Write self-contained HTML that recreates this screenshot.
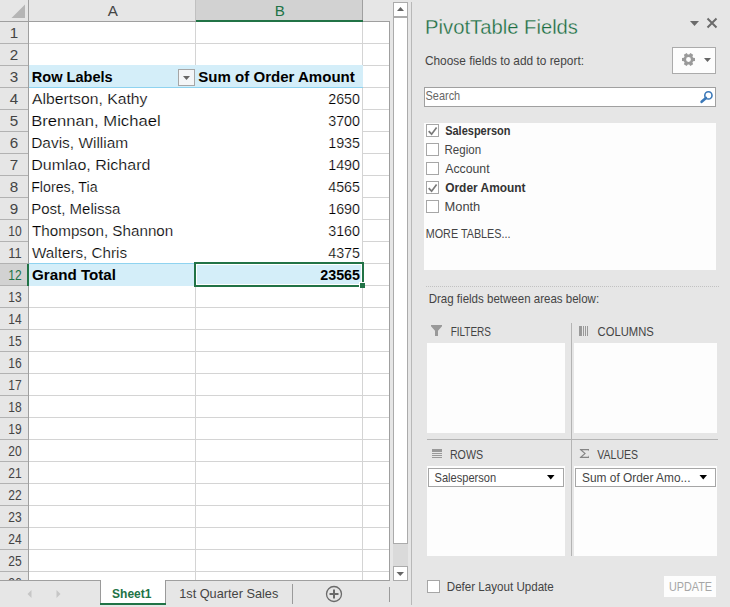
<!DOCTYPE html>
<html><head><meta charset="utf-8"><title>PivotTable</title>
<style>html,body{margin:0;padding:0;background:#e6e6e6;width:730px;height:607px;overflow:hidden;font-family:"Liberation Sans", sans-serif}
svg text{shape-rendering:auto;white-space:pre}
svg path,svg circle,svg line{shape-rendering:geometricPrecision}</style></head>
<body><svg width="730" height="607" viewBox="0 0 730 607" shape-rendering="crispEdges" font-family='"Liberation Sans", sans-serif' style="display:block"><defs><clipPath id="gridclip"><rect x="0" y="0" width="389" height="580"/></clipPath></defs><rect x="0" y="0" width="730" height="607" fill="#e6e6e6" />
<rect x="29" y="22" width="360" height="558" fill="#ffffff" />
<rect x="0" y="0" width="389" height="21" fill="#e6e6e6" />
<rect x="196" y="0" width="166" height="20" fill="#d2d2d2" />
<rect x="0" y="22" width="28" height="558" fill="#e6e6e6" />
<rect x="0" y="264" width="27" height="21" fill="#d2d2d2" />
<path d="M11.5 18 L25 18 L25 4.5 Z" fill="#b5b5b5"/>
<rect x="29" y="43" width="360" height="1" fill="#d4d4d4" />
<rect x="0" y="43" width="28" height="1" fill="#b2b2b2" />
<rect x="29" y="65" width="360" height="1" fill="#d4d4d4" />
<rect x="0" y="65" width="28" height="1" fill="#b2b2b2" />
<rect x="29" y="87" width="360" height="1" fill="#d4d4d4" />
<rect x="0" y="87" width="28" height="1" fill="#b2b2b2" />
<rect x="29" y="109" width="360" height="1" fill="#d4d4d4" />
<rect x="0" y="109" width="28" height="1" fill="#b2b2b2" />
<rect x="29" y="131" width="360" height="1" fill="#d4d4d4" />
<rect x="0" y="131" width="28" height="1" fill="#b2b2b2" />
<rect x="29" y="153" width="360" height="1" fill="#d4d4d4" />
<rect x="0" y="153" width="28" height="1" fill="#b2b2b2" />
<rect x="29" y="175" width="360" height="1" fill="#d4d4d4" />
<rect x="0" y="175" width="28" height="1" fill="#b2b2b2" />
<rect x="29" y="197" width="360" height="1" fill="#d4d4d4" />
<rect x="0" y="197" width="28" height="1" fill="#b2b2b2" />
<rect x="29" y="219" width="360" height="1" fill="#d4d4d4" />
<rect x="0" y="219" width="28" height="1" fill="#b2b2b2" />
<rect x="29" y="241" width="360" height="1" fill="#d4d4d4" />
<rect x="0" y="241" width="28" height="1" fill="#b2b2b2" />
<rect x="29" y="263" width="360" height="1" fill="#d4d4d4" />
<rect x="0" y="263" width="28" height="1" fill="#b2b2b2" />
<rect x="29" y="285" width="360" height="1" fill="#d4d4d4" />
<rect x="0" y="285" width="28" height="1" fill="#b2b2b2" />
<rect x="29" y="307" width="360" height="1" fill="#d4d4d4" />
<rect x="0" y="307" width="28" height="1" fill="#b2b2b2" />
<rect x="29" y="329" width="360" height="1" fill="#d4d4d4" />
<rect x="0" y="329" width="28" height="1" fill="#b2b2b2" />
<rect x="29" y="351" width="360" height="1" fill="#d4d4d4" />
<rect x="0" y="351" width="28" height="1" fill="#b2b2b2" />
<rect x="29" y="373" width="360" height="1" fill="#d4d4d4" />
<rect x="0" y="373" width="28" height="1" fill="#b2b2b2" />
<rect x="29" y="395" width="360" height="1" fill="#d4d4d4" />
<rect x="0" y="395" width="28" height="1" fill="#b2b2b2" />
<rect x="29" y="417" width="360" height="1" fill="#d4d4d4" />
<rect x="0" y="417" width="28" height="1" fill="#b2b2b2" />
<rect x="29" y="439" width="360" height="1" fill="#d4d4d4" />
<rect x="0" y="439" width="28" height="1" fill="#b2b2b2" />
<rect x="29" y="461" width="360" height="1" fill="#d4d4d4" />
<rect x="0" y="461" width="28" height="1" fill="#b2b2b2" />
<rect x="29" y="483" width="360" height="1" fill="#d4d4d4" />
<rect x="0" y="483" width="28" height="1" fill="#b2b2b2" />
<rect x="29" y="505" width="360" height="1" fill="#d4d4d4" />
<rect x="0" y="505" width="28" height="1" fill="#b2b2b2" />
<rect x="29" y="527" width="360" height="1" fill="#d4d4d4" />
<rect x="0" y="527" width="28" height="1" fill="#b2b2b2" />
<rect x="29" y="549" width="360" height="1" fill="#d4d4d4" />
<rect x="0" y="549" width="28" height="1" fill="#b2b2b2" />
<rect x="29" y="571" width="360" height="1" fill="#d4d4d4" />
<rect x="0" y="571" width="28" height="1" fill="#b2b2b2" />
<rect x="195" y="22" width="1" height="558" fill="#d4d4d4" />
<rect x="362" y="22" width="1" height="558" fill="#d4d4d4" />
<rect x="195" y="0" width="1" height="21" fill="#c0c0c0" />
<rect x="362" y="0" width="1" height="20" fill="#a0a0a0" />
<rect x="0" y="21" width="390" height="1" fill="#9f9f9f" />
<rect x="196" y="20" width="167" height="2" fill="#217346" />
<rect x="28" y="0" width="1" height="581" fill="#9f9f9f" />
<rect x="29" y="88" width="333" height="175" fill="#ffffff" />
<rect x="29" y="65" width="334" height="22" fill="#d4eef9" />
<rect x="29" y="87" width="334" height="1" fill="#8fd3f0" />
<rect x="29" y="263" width="334" height="1" fill="#8fd3f0" />
<rect x="29" y="264" width="334" height="22" fill="#d4eef9" />
<rect x="389" y="21" width="1" height="560" fill="#9f9f9f" />
<rect x="0" y="580" width="390" height="1" fill="#9f9f9f" />
<rect x="27" y="264" width="2" height="22" fill="#217346" />
<rect x="178" y="69" width="17" height="17" fill="#f4f6f8" />
<rect x="178" y="69" width="17" height="1" fill="#a6a6a6" />
<rect x="178" y="85" width="17" height="1" fill="#a6a6a6" />
<rect x="178" y="69" width="1" height="17" fill="#a6a6a6" />
<rect x="194" y="69" width="1" height="17" fill="#a6a6a6" />
<path d="M183 76 L190 76 L186.5 80 Z" fill="#666"/>
<rect x="194" y="262" width="170" height="2" fill="#217346" />
<rect x="194" y="262" width="2" height="25" fill="#217346" />
<rect x="194" y="285" width="165" height="2" fill="#217346" />
<rect x="362" y="262" width="2" height="20" fill="#217346" />
<rect x="196" y="264" width="166" height="1" fill="#ffffff" />
<rect x="196" y="264" width="1" height="21" fill="#ffffff" />
<rect x="196" y="284" width="166" height="1" fill="#ffffff" />
<rect x="361" y="264" width="1" height="21" fill="#ffffff" />
<rect x="359" y="282" width="6" height="6" fill="#ffffff" />
<rect x="360" y="283" width="5" height="5" fill="#217346" />
<g clip-path="url(#gridclip)">
<text x="112.7" y="16" font-size="15.2" fill="#444" font-weight="400" text-anchor="middle" >A</text>
<text x="279.7" y="16" font-size="15.2" fill="#217346" font-weight="400" text-anchor="middle" >B</text>
<text x="14.0" y="37.8" font-size="15.2" fill="#444" font-weight="400" text-anchor="middle" >1</text>
<text x="14.0" y="59.8" font-size="15.2" fill="#444" font-weight="400" text-anchor="middle" >2</text>
<text x="14.0" y="81.8" font-size="15.2" fill="#444" font-weight="400" text-anchor="middle" >3</text>
<text x="14.0" y="103.8" font-size="15.2" fill="#444" font-weight="400" text-anchor="middle" >4</text>
<text x="14.0" y="125.8" font-size="15.2" fill="#444" font-weight="400" text-anchor="middle" >5</text>
<text x="14.0" y="147.8" font-size="15.2" fill="#444" font-weight="400" text-anchor="middle" >6</text>
<text x="14.0" y="169.8" font-size="15.2" fill="#444" font-weight="400" text-anchor="middle" >7</text>
<text x="14.0" y="191.8" font-size="15.2" fill="#444" font-weight="400" text-anchor="middle" >8</text>
<text x="14.0" y="213.8" font-size="15.2" fill="#444" font-weight="400" text-anchor="middle" >9</text>
<text x="14.9" y="235.8" font-size="15.2" fill="#444" font-weight="400" text-anchor="middle" textLength="13.4" lengthAdjust="spacingAndGlyphs" >10</text>
<text x="14.9" y="257.8" font-size="15.2" fill="#444" font-weight="400" text-anchor="middle" textLength="13.4" lengthAdjust="spacingAndGlyphs" >11</text>
<text x="14.9" y="279.8" font-size="15.2" fill="#217346" font-weight="400" text-anchor="middle" textLength="13.4" lengthAdjust="spacingAndGlyphs" >12</text>
<text x="14.9" y="301.8" font-size="15.2" fill="#444" font-weight="400" text-anchor="middle" textLength="13.4" lengthAdjust="spacingAndGlyphs" >13</text>
<text x="14.9" y="323.8" font-size="15.2" fill="#444" font-weight="400" text-anchor="middle" textLength="13.4" lengthAdjust="spacingAndGlyphs" >14</text>
<text x="14.9" y="345.8" font-size="15.2" fill="#444" font-weight="400" text-anchor="middle" textLength="13.4" lengthAdjust="spacingAndGlyphs" >15</text>
<text x="14.9" y="367.8" font-size="15.2" fill="#444" font-weight="400" text-anchor="middle" textLength="13.4" lengthAdjust="spacingAndGlyphs" >16</text>
<text x="14.9" y="389.8" font-size="15.2" fill="#444" font-weight="400" text-anchor="middle" textLength="13.4" lengthAdjust="spacingAndGlyphs" >17</text>
<text x="14.9" y="411.8" font-size="15.2" fill="#444" font-weight="400" text-anchor="middle" textLength="13.4" lengthAdjust="spacingAndGlyphs" >18</text>
<text x="14.9" y="433.8" font-size="15.2" fill="#444" font-weight="400" text-anchor="middle" textLength="13.4" lengthAdjust="spacingAndGlyphs" >19</text>
<text x="14.9" y="455.8" font-size="15.2" fill="#444" font-weight="400" text-anchor="middle" textLength="13.4" lengthAdjust="spacingAndGlyphs" >20</text>
<text x="14.9" y="477.8" font-size="15.2" fill="#444" font-weight="400" text-anchor="middle" textLength="13.4" lengthAdjust="spacingAndGlyphs" >21</text>
<text x="14.9" y="499.8" font-size="15.2" fill="#444" font-weight="400" text-anchor="middle" textLength="13.4" lengthAdjust="spacingAndGlyphs" >22</text>
<text x="14.9" y="521.8" font-size="15.2" fill="#444" font-weight="400" text-anchor="middle" textLength="13.4" lengthAdjust="spacingAndGlyphs" >23</text>
<text x="14.9" y="543.8" font-size="15.2" fill="#444" font-weight="400" text-anchor="middle" textLength="13.4" lengthAdjust="spacingAndGlyphs" >24</text>
<text x="14.9" y="565.8" font-size="15.2" fill="#444" font-weight="400" text-anchor="middle" textLength="13.4" lengthAdjust="spacingAndGlyphs" >25</text>
<text x="14.9" y="587.8" font-size="15.2" fill="#444" font-weight="400" text-anchor="middle" textLength="13.4" lengthAdjust="spacingAndGlyphs" >26</text>
</g>
<g clip-path="url(#gridclip)">
<text x="31.8" y="81.7" font-size="14.3" fill="#000000" font-weight="700" text-anchor="start" textLength="80.9" lengthAdjust="spacingAndGlyphs" >Row Labels</text>
<text x="198.3" y="81.7" font-size="14.3" fill="#000000" font-weight="700" text-anchor="start" textLength="156.5" lengthAdjust="spacingAndGlyphs" >Sum of Order Amount</text>
<text x="32" y="103.5" font-size="14.3" fill="#000000" font-weight="400" text-anchor="start" textLength="115.4" lengthAdjust="spacingAndGlyphs" stroke="#ffffff" stroke-width="0.2">Albertson, Kathy</text>
<text x="360" y="103.5" font-size="14.3" fill="#000000" font-weight="400" text-anchor="end" stroke="#ffffff" stroke-width="0.2">2650</text>
<text x="31.2" y="125.5" font-size="14.3" fill="#000000" font-weight="400" text-anchor="start" textLength="129.4" lengthAdjust="spacingAndGlyphs" stroke="#ffffff" stroke-width="0.2">Brennan, Michael</text>
<text x="360" y="125.5" font-size="14.3" fill="#000000" font-weight="400" text-anchor="end" stroke="#ffffff" stroke-width="0.2">3700</text>
<text x="31.2" y="147.5" font-size="14.3" fill="#000000" font-weight="400" text-anchor="start" textLength="97.0" lengthAdjust="spacingAndGlyphs" stroke="#ffffff" stroke-width="0.2">Davis, William</text>
<text x="360" y="147.5" font-size="14.3" fill="#000000" font-weight="400" text-anchor="end" stroke="#ffffff" stroke-width="0.2">1935</text>
<text x="31.2" y="169.5" font-size="14.3" fill="#000000" font-weight="400" text-anchor="start" textLength="119.2" lengthAdjust="spacingAndGlyphs" stroke="#ffffff" stroke-width="0.2">Dumlao, Richard</text>
<text x="360" y="169.5" font-size="14.3" fill="#000000" font-weight="400" text-anchor="end" stroke="#ffffff" stroke-width="0.2">1490</text>
<text x="31.2" y="191.5" font-size="14.3" fill="#000000" font-weight="400" text-anchor="start" textLength="66.4" lengthAdjust="spacingAndGlyphs" stroke="#ffffff" stroke-width="0.2">Flores, Tia</text>
<text x="360" y="191.5" font-size="14.3" fill="#000000" font-weight="400" text-anchor="end" stroke="#ffffff" stroke-width="0.2">4565</text>
<text x="31.2" y="213.5" font-size="14.3" fill="#000000" font-weight="400" text-anchor="start" textLength="89.2" lengthAdjust="spacingAndGlyphs" stroke="#ffffff" stroke-width="0.2">Post, Melissa</text>
<text x="360" y="213.5" font-size="14.3" fill="#000000" font-weight="400" text-anchor="end" stroke="#ffffff" stroke-width="0.2">1690</text>
<text x="32" y="235.5" font-size="14.3" fill="#000000" font-weight="400" text-anchor="start" textLength="141.3" lengthAdjust="spacingAndGlyphs" stroke="#ffffff" stroke-width="0.2">Thompson, Shannon</text>
<text x="360" y="235.5" font-size="14.3" fill="#000000" font-weight="400" text-anchor="end" stroke="#ffffff" stroke-width="0.2">3160</text>
<text x="32" y="257.5" font-size="14.3" fill="#000000" font-weight="400" text-anchor="start" textLength="95.1" lengthAdjust="spacingAndGlyphs" stroke="#ffffff" stroke-width="0.2">Walters, Chris</text>
<text x="360" y="257.5" font-size="14.3" fill="#000000" font-weight="400" text-anchor="end" stroke="#ffffff" stroke-width="0.2">4375</text>
<text x="32" y="279.6" font-size="14.3" fill="#000000" font-weight="700" text-anchor="start" textLength="84" lengthAdjust="spacingAndGlyphs" >Grand Total</text>
<text x="360" y="279.6" font-size="14.3" fill="#000000" font-weight="700" text-anchor="end" >23565</text>
</g>
<rect x="393" y="2" width="15" height="15" fill="#ffffff" />
<rect x="393" y="2" width="15" height="1" fill="#ababab" />
<rect x="393" y="16" width="15" height="1" fill="#ababab" />
<rect x="393" y="2" width="1" height="15" fill="#ababab" />
<rect x="407" y="2" width="1" height="15" fill="#ababab" />
<path d="M397 11 L404 11 L400.5 7 Z" fill="#666"/>
<rect x="393" y="17" width="15" height="527" fill="#ffffff" />
<rect x="393" y="17" width="15" height="1" fill="#ababab" />
<rect x="393" y="543" width="15" height="1" fill="#ababab" />
<rect x="393" y="17" width="1" height="527" fill="#ababab" />
<rect x="407" y="17" width="1" height="527" fill="#ababab" />
<rect x="393" y="544" width="15" height="22" fill="#dadada" />
<rect x="393" y="566" width="15" height="15" fill="#ffffff" />
<rect x="393" y="566" width="15" height="1" fill="#ababab" />
<rect x="393" y="580" width="15" height="1" fill="#ababab" />
<rect x="393" y="566" width="1" height="15" fill="#ababab" />
<rect x="407" y="566" width="1" height="15" fill="#ababab" />
<path d="M396.5 572 L404 572 L400.25 576 Z" fill="#666"/>
<rect x="411" y="2" width="1" height="603" fill="#b8b8b8" />
<path d="M27.5 594 L31.5 590 L31.5 598 Z" fill="#c6c6c6"/>
<path d="M60.5 594 L56.5 590 L56.5 598 Z" fill="#c6c6c6"/>
<rect x="101" y="580" width="64" height="23" fill="#ffffff" />
<rect x="100" y="580" width="1" height="23" fill="#9a9a9a" />
<rect x="165" y="580" width="1" height="23" fill="#9a9a9a" />
<rect x="100" y="603" width="66" height="2" fill="#217346" />
<rect x="166" y="580" width="224" height="1" fill="#9f9f9f" />
<rect x="292" y="584" width="1" height="20" fill="#9a9a9a" />
<rect x="389" y="587" width="1" height="15" fill="#9a9a9a" />
<circle cx="334" cy="594" r="7.5" fill="none" stroke="#6a6a6a" stroke-width="1.3"/>
<path d="M334 589.5 V598.5 M329.5 594 H338.5" stroke="#6a6a6a" stroke-width="2"/>
<text x="112.1" y="598" font-size="13.5" fill="#217346" font-weight="700" text-anchor="start" textLength="39.4" lengthAdjust="spacingAndGlyphs" >Sheet1</text>
<text x="179.2" y="598" font-size="13.5" fill="#444" font-weight="400" text-anchor="start" textLength="99.1" lengthAdjust="spacingAndGlyphs" >1st Quarter Sales</text>
<text x="425.12" y="34" font-size="20.5" fill="#1b6e42" font-weight="400" text-anchor="start" textLength="152.88" lengthAdjust="spacingAndGlyphs" stroke="#e6e6e6" stroke-width="0.3">PivotTable Fields</text>
<path d="M690 21 L699 21 L694.5 26 Z" fill="#6b6b6b"/>
<path d="M707.5 18.5 L716.5 27.5 M716.5 18.5 L707.5 27.5" stroke="#6b6b6b" stroke-width="2"/>
<text x="424.92" y="65.2" font-size="12.6" fill="#444444" font-weight="400" text-anchor="start" textLength="159.08" lengthAdjust="spacingAndGlyphs" >Choose fields to add to report:</text>
<rect x="672" y="47" width="44" height="27" fill="#fdfdfd" />
<rect x="672" y="47" width="44" height="1" fill="#ababab" />
<rect x="672" y="73" width="44" height="1" fill="#ababab" />
<rect x="672" y="47" width="1" height="27" fill="#ababab" />
<rect x="715" y="47" width="1" height="27" fill="#ababab" />
<path d="M693.14,57.63 L695.00,57.88 L695.00,61.12 L693.14,61.37 L692.44,62.58 L693.15,64.32 L690.35,65.94 L689.20,64.45 L687.80,64.45 L686.65,65.94 L683.85,64.32 L684.56,62.58 L683.86,61.37 L682.00,61.12 L682.00,57.88 L683.86,57.63 L684.56,56.42 L683.85,54.68 L686.65,53.06 L687.80,54.55 L689.20,54.55 L690.35,53.06 L693.15,54.68 L692.44,56.42 Z M690.9,59.5 A2.4 2.4 0 1 0 686.1,59.5 A2.4 2.4 0 1 0 690.9,59.5 Z" fill="#9a9a9a" fill-rule="evenodd"/>
<path d="M704 58 L711 58 L707.5 62 Z" fill="#666"/>
<rect x="424" y="87" width="292" height="20" fill="#ffffff" />
<rect x="424" y="87" width="292" height="1" fill="#a0a0a0" />
<rect x="424" y="106" width="292" height="1" fill="#a0a0a0" />
<rect x="424" y="87" width="1" height="20" fill="#a0a0a0" />
<rect x="715" y="87" width="1" height="20" fill="#a0a0a0" />
<text x="425.56" y="100" font-size="12.6" fill="#666666" font-weight="400" text-anchor="start" textLength="34.64" lengthAdjust="spacingAndGlyphs" >Search</text>
<circle cx="708.4" cy="95.4" r="3.6" fill="none" stroke="#3b78b8" stroke-width="1.6"/>
<path d="M706 98 L701.6 101.8" stroke="#3b78b8" stroke-width="2.6" stroke-linecap="round"/>
<rect x="424" y="123" width="292" height="147" fill="#fdfdfd" />
<rect x="426" y="124" width="13" height="13" fill="#ffffff" />
<rect x="426" y="124" width="13" height="1" fill="#a6a6a6" />
<rect x="426" y="136" width="13" height="1" fill="#a6a6a6" />
<rect x="426" y="124" width="1" height="13" fill="#a6a6a6" />
<rect x="438" y="124" width="1" height="13" fill="#a6a6a6" />
<path d="M428.7 131.1 L431.6 134.2 L436.6 127.6" fill="none" stroke="#7a7a7a" stroke-width="1.7"/>
<text x="445.2" y="134.6" font-size="12.6" fill="#333333" font-weight="700" text-anchor="start" textLength="65.3" lengthAdjust="spacingAndGlyphs" >Salesperson</text>
<rect x="426" y="143" width="13" height="13" fill="#ffffff" />
<rect x="426" y="143" width="13" height="1" fill="#a6a6a6" />
<rect x="426" y="155" width="13" height="1" fill="#a6a6a6" />
<rect x="426" y="143" width="1" height="13" fill="#a6a6a6" />
<rect x="438" y="143" width="1" height="13" fill="#a6a6a6" />
<text x="444.56" y="153.6" font-size="12.6" fill="#444444" font-weight="400" text-anchor="start" textLength="36.54" lengthAdjust="spacingAndGlyphs" >Region</text>
<rect x="426" y="162" width="13" height="13" fill="#ffffff" />
<rect x="426" y="162" width="13" height="1" fill="#a6a6a6" />
<rect x="426" y="174" width="13" height="1" fill="#a6a6a6" />
<rect x="426" y="162" width="1" height="13" fill="#a6a6a6" />
<rect x="438" y="162" width="1" height="13" fill="#a6a6a6" />
<text x="445.2" y="172.6" font-size="12.6" fill="#444444" font-weight="400" text-anchor="start" textLength="44.4" lengthAdjust="spacingAndGlyphs" >Account</text>
<rect x="426" y="181" width="13" height="13" fill="#ffffff" />
<rect x="426" y="181" width="13" height="1" fill="#a6a6a6" />
<rect x="426" y="193" width="13" height="1" fill="#a6a6a6" />
<rect x="426" y="181" width="1" height="13" fill="#a6a6a6" />
<rect x="438" y="181" width="1" height="13" fill="#a6a6a6" />
<path d="M428.7 188.1 L431.6 191.2 L436.6 184.6" fill="none" stroke="#7a7a7a" stroke-width="1.7"/>
<text x="445.2" y="191.6" font-size="12.6" fill="#333333" font-weight="700" text-anchor="start" textLength="80.4" lengthAdjust="spacingAndGlyphs" >Order Amount</text>
<rect x="426" y="200" width="13" height="13" fill="#ffffff" />
<rect x="426" y="200" width="13" height="1" fill="#a6a6a6" />
<rect x="426" y="212" width="13" height="1" fill="#a6a6a6" />
<rect x="426" y="200" width="1" height="13" fill="#a6a6a6" />
<rect x="438" y="200" width="1" height="13" fill="#a6a6a6" />
<text x="444.56" y="210.6" font-size="12.6" fill="#444444" font-weight="400" text-anchor="start" textLength="35.74" lengthAdjust="spacingAndGlyphs" >Month</text>
<text x="425.74" y="237.6" font-size="12.6" fill="#444444" font-weight="400" text-anchor="start" textLength="84.76" lengthAdjust="spacingAndGlyphs" >MORE TABLES...</text>
<line x1="426" y1="286.5" x2="719" y2="286.5" stroke="#c2c2c2" stroke-width="1" stroke-dasharray="1 1"/>
<text x="428.7" y="302.5" font-size="12.6" fill="#444444" font-weight="400" text-anchor="start" textLength="170.4" lengthAdjust="spacingAndGlyphs" >Drag fields between areas below:</text>
<rect x="427" y="343" width="138" height="90" fill="#fdfdfd" />
<rect x="574" y="343" width="143" height="90" fill="#fdfdfd" />
<rect x="427" y="466" width="138" height="90" fill="#fdfdfd" />
<rect x="574" y="466" width="143" height="90" fill="#fdfdfd" />
<rect x="571" y="323" width="1" height="233" fill="#b4b4b4" />
<rect x="427" y="439" width="291" height="1" fill="#b4b4b4" />
<path d="M431 325 L442 325 L442 326.3 L438 330.8 L438 336 L435 336 L435 330.8 L431 326.3 Z" fill="#999"/>
<text x="450.7" y="335.8" font-size="12.6" fill="#444444" font-weight="400" text-anchor="start" textLength="40.3" lengthAdjust="spacingAndGlyphs" >FILTERS</text>
<rect x="579" y="326" width="3" height="10" fill="#999" />
<rect x="583" y="326" width="1" height="10" fill="#999" />
<rect x="585" y="326" width="1" height="10" fill="#999" />
<rect x="587" y="326" width="1" height="10" fill="#999" />
<text x="597.6" y="336" font-size="12.6" fill="#444444" font-weight="400" text-anchor="start" textLength="56.2" lengthAdjust="spacingAndGlyphs" >COLUMNS</text>
<rect x="432" y="449" width="10" height="3" fill="#999" />
<rect x="432" y="453" width="10" height="1" fill="#999" />
<rect x="432" y="455" width="10" height="1" fill="#999" />
<rect x="432" y="457" width="10" height="1" fill="#999" />
<text x="449.92" y="458.7" font-size="12.6" fill="#444444" font-weight="400" text-anchor="start" textLength="33.18" lengthAdjust="spacingAndGlyphs" >ROWS</text>
<path d="M579.8 449 H589 V451.2 L588.3 450.2 H582.2 L585.9 453.5 L582.2 456.8 H588.3 L589 455.2 V458 H579.8 V457.2 L584.2 453.5 L579.8 449.8 Z" fill="#858585"/>
<text x="597.3" y="458.7" font-size="12.6" fill="#444444" font-weight="400" text-anchor="start" textLength="40.7" lengthAdjust="spacingAndGlyphs" >VALUES</text>
<rect x="428" y="468" width="136" height="19" fill="#ffffff" />
<rect x="428" y="468" width="136" height="1" fill="#a6a6a6" />
<rect x="428" y="486" width="136" height="1" fill="#a6a6a6" />
<rect x="428" y="468" width="1" height="19" fill="#a6a6a6" />
<rect x="563" y="468" width="1" height="19" fill="#a6a6a6" />
<text x="434.56" y="482" font-size="12.6" fill="#444444" font-weight="400" text-anchor="start" textLength="61.64" lengthAdjust="spacingAndGlyphs" >Salesperson</text>
<path d="M547 475 L554.5 475 L550.75 479.5 Z" fill="#000"/>
<rect x="575" y="468" width="141" height="19" fill="#ffffff" />
<rect x="575" y="468" width="141" height="1" fill="#a6a6a6" />
<rect x="575" y="486" width="141" height="1" fill="#a6a6a6" />
<rect x="575" y="468" width="1" height="19" fill="#a6a6a6" />
<rect x="715" y="468" width="1" height="19" fill="#a6a6a6" />
<text x="582" y="482" font-size="12.6" fill="#444444" font-weight="400" text-anchor="start" textLength="108.5" lengthAdjust="spacingAndGlyphs" >Sum of Order Amo...</text>
<path d="M699.5 475 L707 475 L703.25 479.5 Z" fill="#000"/>
<rect x="427" y="580" width="13" height="13" fill="#ffffff" />
<rect x="427" y="580" width="13" height="1" fill="#a6a6a6" />
<rect x="427" y="592" width="13" height="1" fill="#a6a6a6" />
<rect x="427" y="580" width="1" height="13" fill="#a6a6a6" />
<rect x="439" y="580" width="1" height="13" fill="#a6a6a6" />
<text x="446.8" y="590.8" font-size="12.6" fill="#444444" font-weight="400" text-anchor="start" textLength="107.0" lengthAdjust="spacingAndGlyphs" >Defer Layout Update</text>
<rect x="664" y="576" width="52" height="21" fill="#fdfdfd" />
<text x="668.9" y="591" font-size="12.6" fill="#a6a6a6" font-weight="400" text-anchor="start" textLength="43.1" lengthAdjust="spacingAndGlyphs" >UPDATE</text></svg></body></html>
